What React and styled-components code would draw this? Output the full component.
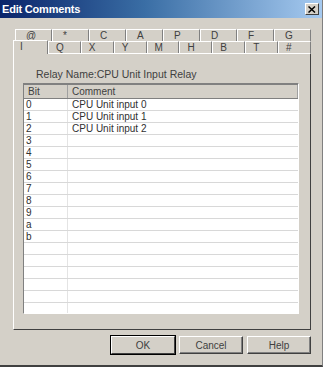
import React from 'react'
import styled, { createGlobalStyle } from 'styled-components'

const Global = createGlobalStyle`
  html, body { margin: 0; padding: 0; background: #d4d0c8; }
  body { font-family: "Liberation Sans", Arial, sans-serif; }
`

const Window = styled.div`
  width: 323px;
  height: 367px;
  box-sizing: border-box;
  background: #d4d0c8;
  border-right: 1px solid #808080;
  border-bottom: 2px solid #404040;
  display: flex;
  flex-direction: column;
  overflow: hidden;
`

const TitleBar = styled.div`
  height: 18px;
  flex: none;
  display: flex;
  align-items: center;
  justify-content: space-between;
  padding: 0 3px 0 2px;
  background: linear-gradient(to right, #0a246a 0%, #3a6ea5 45%, #a6caf0 100%);
`

const Title = styled.span`
  color: #fff;
  font-weight: bold;
  font-size: 11px;
  letter-spacing: -0.2px;
`

const CloseButton = styled.div`
  width: 14px;
  height: 12px;
  box-sizing: border-box;
  background: #d4d0c8;
  border: 1px solid;
  border-color: #fff #404040 #404040 #fff;
  display: flex;
  align-items: center;
  justify-content: center;
`

const Body = styled.div`
  flex: 1;
  display: flex;
  flex-direction: column;
  padding: 11px 11px 0 13px;
`

const TabRow = styled.div`
  display: flex;
  height: 12px;
  padding-left: ${p => p.$indent}px;
  align-items: flex-end;
`

const Tab = styled.div`
  width: ${p => p.$w}px;
  height: ${p => (p.$active ? 14 : 12)}px;
  box-sizing: border-box;
  background: #d4d0c8;
  border-top: 1px solid #fff;
  border-left: 1px solid #fff;
  border-right: 1px solid #808080;
  font-size: 10px;
  color: #404040;
  padding-left: ${p => p.$pad}px;
  line-height: ${p => (p.$active ? 12 : 11)}px;
  position: relative;
  z-index: ${p => (p.$active ? 2 : 1)};
  margin-bottom: ${p => (p.$active ? -1 : 0)}px;
`

const Panel = styled.div`
  height: 277px;
  box-sizing: border-box;
  border: 1px solid;
  border-color: #fff #404040 #404040 #fff;
  padding: 14px 12px 0 9px;
  display: flex;
  flex-direction: column;
`

const RelayLabel = styled.div`
  font-size: 10.5px;
  color: #404040;
  padding-left: 13px;
  height: 15px;
  line-height: 12px;
`

const Table = styled.div`
  width: 276px;
  height: 231px;
  box-sizing: border-box;
  border: 1px solid;
  border-color: #808080 #fff #fff #808080;
  background: #fff;
  overflow: hidden;
`

const HeaderRow = styled.div`
  display: grid;
  grid-template-columns: 44px 1fr;
  height: 13px;
  background: #d4d0c8;
  border-bottom: 1px solid #808080;
  border-top: 1px solid #808080;
`

const HeaderCell = styled.div`
  font-size: 10px;
  color: #404040;
  padding-left: 4px;
  line-height: 13px;
  border-right: 1px solid #a0a0a0;
`

const Row = styled.div`
  display: grid;
  grid-template-columns: 44px 1fr;
  height: 12px;
  box-sizing: border-box;
  border-bottom: 1px solid #d8d8d8;
`

const Cell = styled.div`
  font-size: 10px;
  color: #303030;
  padding-left: ${p => (p.$first ? 2 : 4)}px;
  line-height: 11px;
  border-right: ${p => (p.$first ? '1px solid #e4e4e4' : 'none')};
`

const ButtonBar = styled.div`
  display: flex;
  justify-content: flex-end;
  gap: 4px;
  padding: 6px 0 0 0;
`

const Button = styled.div`
  width: 64px;
  height: 18px;
  box-sizing: border-box;
  border: 1px solid;
  border-color: #fff #404040 #404040 #fff;
  box-shadow: ${p => (p.$default ? '0 0 0 1px #000' : 'inset -1px -1px 0 #808080')};
  font-size: 10px;
  color: #404040;
  display: flex;
  align-items: center;
  justify-content: center;
`

const topTabs = ['@', '*', 'C', 'A', 'P', 'D', 'F', 'G']
const bottomTabs = ['I', 'Q', 'X', 'Y', 'M', 'H', 'B', 'T', '#']
const rows = [
  ['0', 'CPU Unit input 0'],
  ['1', 'CPU Unit input 1'],
  ['2', 'CPU Unit input 2'],
  ['3', ''], ['4', ''], ['5', ''], ['6', ''], ['7', ''], ['8', ''], ['9', ''],
  ['a', ''], ['b', ''], ['', ''], ['', ''], ['', ''], ['', ''], ['', ''], ['', ''], ['', '']
]

export default function App() {
  return (
    <>
      <Global />
      <Window>
        <TitleBar>
          <Title>Edit Comments</Title>
          <CloseButton>
            <svg width="8" height="7" viewBox="0 0 8 7">
              <path d="M0.5 0.5 L7 6.5 M7 0.5 L0.5 6.5" stroke="#000" strokeWidth="1.5" />
            </svg>
          </CloseButton>
        </TitleBar>
        <Body>
          <TabRow $indent={2}>
            {topTabs.map(t => (
              <Tab key={t} $w={37} $pad={10}>{t}</Tab>
            ))}
          </TabRow>
          <TabRow $indent={0}>
            {bottomTabs.map((t, i) => (
              <Tab key={t} $w={i === 0 ? 35 : 33} $pad={i === 0 ? 6 : 7} $active={i === 0}>{t}</Tab>
            ))}
          </TabRow>
          <Panel>
            <RelayLabel>Relay Name:CPU Unit Input Relay</RelayLabel>
            <Table>
              <HeaderRow>
                <HeaderCell>Bit</HeaderCell>
                <HeaderCell>Comment</HeaderCell>
              </HeaderRow>
              {rows.map((r, i) => (
                <Row key={i}>
                  <Cell $first>{r[0]}</Cell>
                  <Cell>{r[1]}</Cell>
                </Row>
              ))}
            </Table>
          </Panel>
          <ButtonBar>
            <Button $default>OK</Button>
            <Button>Cancel</Button>
            <Button>Help</Button>
          </ButtonBar>
        </Body>
      </Window>
    </>
  )
}
